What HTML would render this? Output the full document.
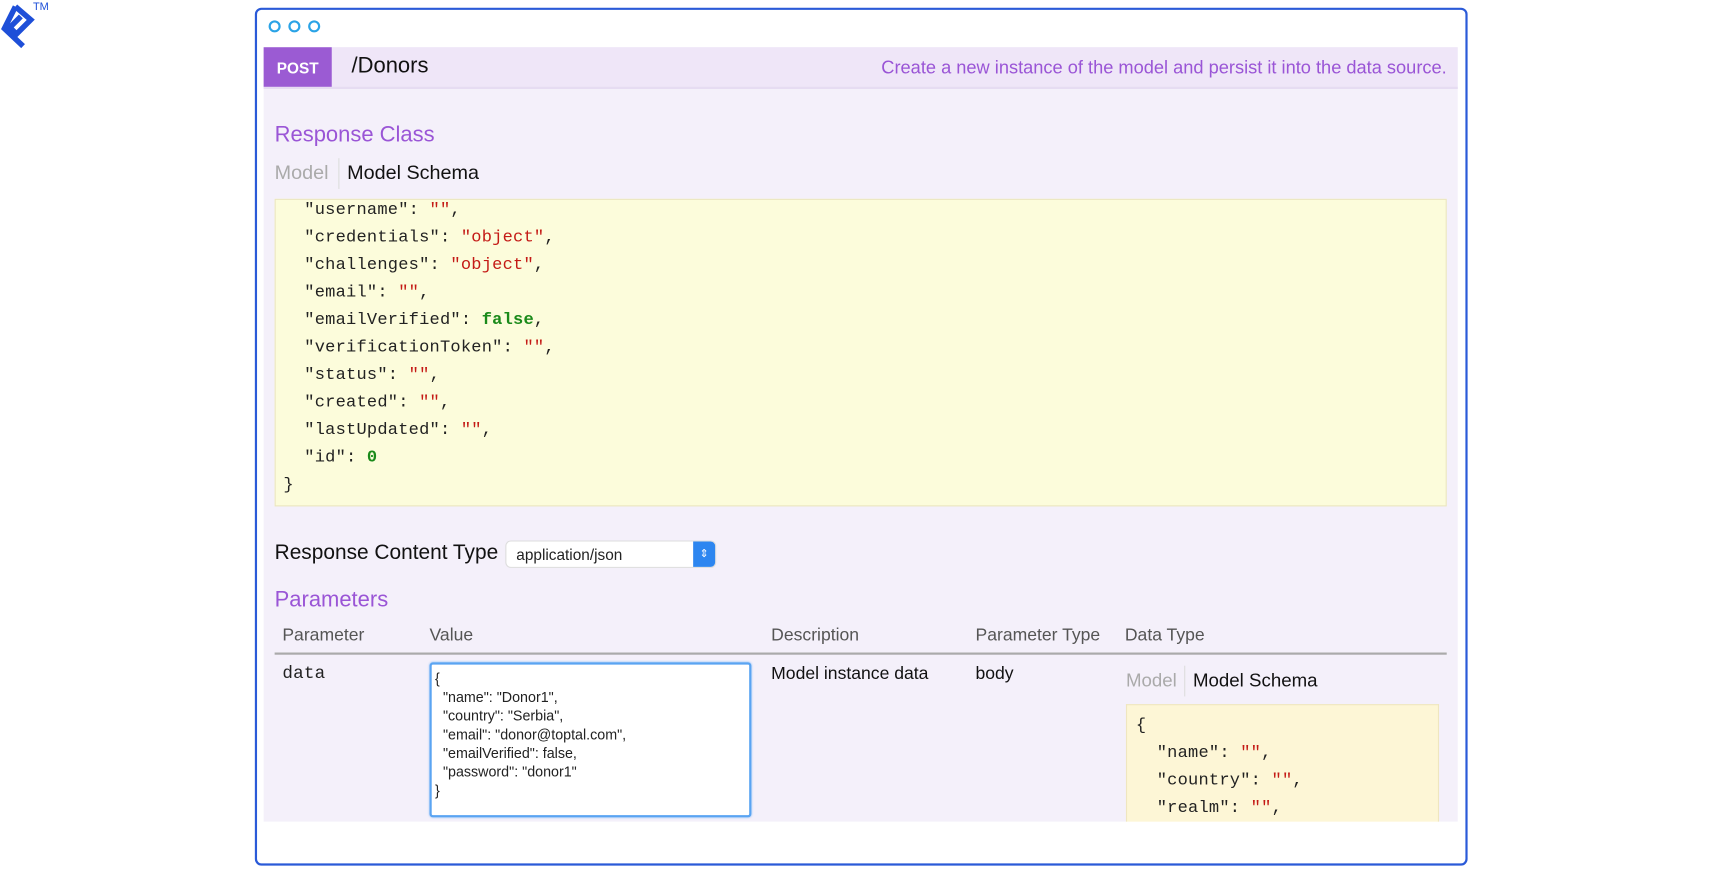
<!DOCTYPE html>
<html><head><meta charset="utf-8"><style>
html,body{margin:0;padding:0;background:#fff;width:1720px;height:872px;overflow:hidden}
#w{position:absolute;left:0;top:0;width:1560px;height:791px;transform:scale(1.0985);transform-origin:0 0;font-family:"Liberation Sans",sans-serif}
.a{position:absolute;white-space:nowrap}
.m{font-family:"Liberation Mono",monospace;font-size:15.5px;color:#222;letter-spacing:0.2px}
.s{color:#c41a16}.g{color:#1a8a1a;font-weight:bold}
.p{color:#9a55d6}
</style></head><body><div id="w">
<svg class="a" style="left:0;top:2px" width="34" height="44" viewBox="0 0 34 44"><path d="M14 4 L4 24 L21 40 M14 4 L28 16 L15 29 L9 23 L19 13" stroke="#1e4fd8" stroke-width="5" fill="none" stroke-linejoin="miter"/></svg>
<div class="a" style="left:30px;top:1px;font-size:10px;color:#1e4fd8">TM</div>
<div class="a" style="left:232px;top:7px;width:1100px;height:777px;border:2px solid #2a5ad8;border-radius:6px"></div>
<svg class="a" style="left:243px;top:17px" width="52" height="14"><circle cx="7" cy="7" r="4.5" stroke="#2aa3e6" stroke-width="2" fill="none"/><circle cx="25" cy="7" r="4.5" stroke="#2aa3e6" stroke-width="2" fill="none"/><circle cx="43" cy="7" r="4.5" stroke="#2aa3e6" stroke-width="2" fill="none"/></svg>
<div class="a" style="left:240px;top:43px;width:1087px;height:705px;background:#f4f0fa"></div>
<div class="a" style="left:240px;top:43px;width:1087px;height:36px;background:#efe6f8;border-bottom:2px solid #e6dcf2"></div>
<div class="a" style="left:240px;top:43px;width:62px;height:36px;background:#9b5bd3;color:#fff;font-weight:bold;font-size:14px;line-height:38px;text-align:center">POST</div>
<div class="a" style="left:320px;top:49px;font-size:20px;color:#111">/Donors</div>
<div class="a p" style="right:243px;top:52px;font-size:16.6px">Create a new instance of the model and persist it into the data source.</div>
<div class="a p" style="left:250px;top:112px;font-size:20px">Response Class</div>
<div class="a" style="left:250px;top:147px;font-size:18px;color:#aaa">Model</div>
<div class="a" style="left:308px;top:144px;width:1px;height:28px;background:#ddd"></div>
<div class="a" style="left:316px;top:147px;font-size:18px;color:#111">Model Schema</div>
<div class="a" style="left:250px;top:181px;width:1065px;height:278px;background:#fcfcdb;border:1px solid #ebe6c0;overflow:hidden"></div>
<div class="a m" style="left:258px;top:179px;line-height:25px">
&nbsp;&nbsp;"username": <span class="s">""</span>,<br>
&nbsp;&nbsp;"credentials": <span class="s">"object"</span>,<br>
&nbsp;&nbsp;"challenges": <span class="s">"object"</span>,<br>
&nbsp;&nbsp;"email": <span class="s">""</span>,<br>
&nbsp;&nbsp;"emailVerified": <span class="g">false</span>,<br>
&nbsp;&nbsp;"verificationToken": <span class="s">""</span>,<br>
&nbsp;&nbsp;"status": <span class="s">""</span>,<br>
&nbsp;&nbsp;"created": <span class="s">""</span>,<br>
&nbsp;&nbsp;"lastUpdated": <span class="s">""</span>,<br>
&nbsp;&nbsp;"id": <span class="g">0</span><br>}</div>
<div class="a" style="left:250px;top:493px;font-size:19px;color:#111">Response Content Type</div>
<div class="a" style="left:461px;top:493px;width:190px;height:23px;background:#fff;border-radius:4px;box-shadow:0 0 0 1px #ddd"></div>
<div class="a" style="left:470px;top:497px;font-size:14px;color:#222">application/json</div>
<div class="a" style="left:631px;top:493px;width:20px;height:23px;background:#2d86f0;border-radius:0 4px 4px 0;color:#fff;font-size:10px;text-align:center;line-height:23px">⇕</div>
<div class="a p" style="left:250px;top:535px;font-size:20px">Parameters</div>
<div class="a" style="left:257px;top:570px;font-size:16px;color:#555">Parameter</div>
<div class="a" style="left:391px;top:570px;font-size:16px;color:#555">Value</div>
<div class="a" style="left:702px;top:570px;font-size:16px;color:#555">Description</div>
<div class="a" style="left:888px;top:570px;font-size:16px;color:#555">Parameter Type</div>
<div class="a" style="left:1024px;top:570px;font-size:16px;color:#555">Data Type</div>
<div class="a" style="left:250px;top:594px;width:1067px;height:2px;background:#aaa"></div>
<div class="a m" style="left:257px;top:604px;font-size:16px">data</div>
<div class="a" style="left:391px;top:603px;width:289px;height:137px;background:#fff;border:2px solid #5aa4f2;border-radius:3px;box-shadow:0 0 2px #8bc0f8"></div>
<div class="a" style="left:396px;top:609px;font-size:13px;line-height:17px;color:#222">{<br>&nbsp;&nbsp;"name": "Donor1",<br>&nbsp;&nbsp;"country": "Serbia",<br>&nbsp;&nbsp;"email": "donor@toptal.com",<br>&nbsp;&nbsp;"emailVerified": false,<br>&nbsp;&nbsp;"password": "donor1"<br>}</div>
<div class="a" style="left:702px;top:605px;font-size:16px;color:#111">Model instance data</div>
<div class="a" style="left:888px;top:605px;font-size:16px;color:#111">body</div>
<div class="a" style="left:1025px;top:610px;font-size:17px;color:#aaa">Model</div>
<div class="a" style="left:1078px;top:606px;width:1px;height:28px;background:#ddd"></div>
<div class="a" style="left:1086px;top:610px;font-size:17px;color:#111">Model Schema</div>
<div class="a" style="left:1025px;top:641px;width:283px;height:107px;background:#fdf6d6;border:1px solid #efe6bf;border-bottom:none"></div>
<div class="a m" style="left:1034px;top:648px;line-height:25px">{<br>&nbsp;&nbsp;"name": <span class="s">""</span>,<br>&nbsp;&nbsp;"country": <span class="s">""</span>,<br>&nbsp;&nbsp;"realm": <span class="s">""</span>,</div>
<div class="a" style="left:240px;top:748px;width:1090px;height:34px;background:#fff"></div>
</div></body></html>
